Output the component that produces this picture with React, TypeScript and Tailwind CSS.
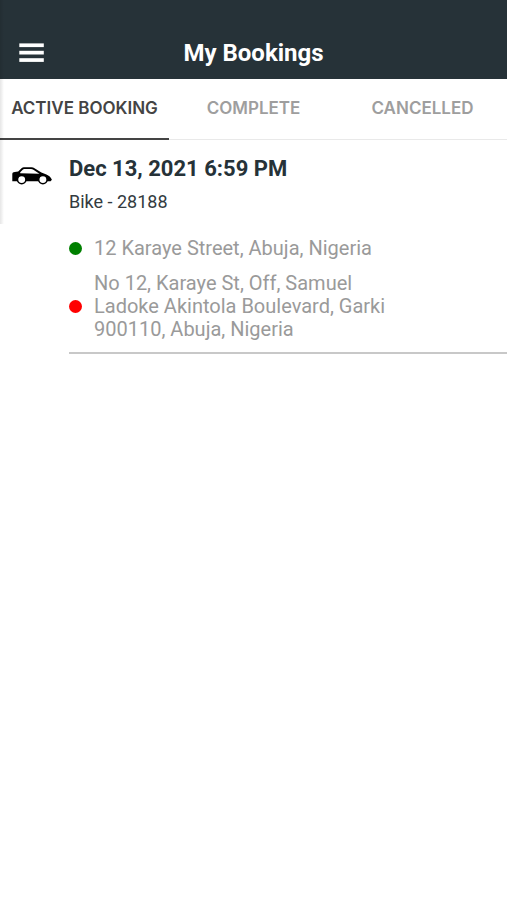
import { useState } from "react";

const tabs = ["ACTIVE BOOKING", "COMPLETE", "CANCELLED"];

const bookings = [
  {
    id: "28188",
    date: "Dec 13, 2021 6:59 PM",
    vehicle: "Bike",
    pickup: "12 Karaye Street, Abuja, Nigeria",
    drop: "No 12, Karaye St, Off, Samuel Ladoke Akintola Boulevard, Garki 900110, Abuja, Nigeria",
  },
];

const CarIcon = () => (
  <svg viewBox="0 0 40 18" className="w-10 shrink-0" aria-hidden="true">
    <path
      d="M0.3 14.2V7.2C0.3 5.7 1.2 5.2 2.8 5L6.2 4.6L9.8 1.1C10.4 0.5 11 0.3 11.8 0.3H19.4C20.6 0.3 21.6 0.6 22.5 1.2L29.4 5.6L34.4 7.6C37 8.7 38.8 10.2 39.9 12.8L38.6 14.2Z"
      fill="#000"
    />
    <path d="M8.2 5.2L11 2.5C11.3 2.2 11.7 2 12.2 2H19C20 2 20.6 2.2 21.4 2.7L27.4 6.8L8.2 6.2Z" fill="#fff" />
    <circle cx="9.7" cy="12.6" r="4.2" fill="#fff" stroke="#000" strokeWidth="1.5" />
    <circle cx="30.9" cy="12.6" r="4.2" fill="#fff" stroke="#000" strokeWidth="1.5" />
  </svg>
);

const Stop = ({ dot, address }: { dot: string; address: string }) => (
  <li className="flex items-center gap-3">
    <span className={`size-[13px] shrink-0 rounded-full ${dot}`} />
    <span className="max-w-[300px]">{address}</span>
  </li>
);

const App = () => {
  const [active, setActive] = useState(tabs[0]);

  return (
    <div className="relative min-h-screen bg-white font-[Roboto,sans-serif]">
      {/* Header */}
      <header className="grid grid-cols-[1fr_auto_1fr] items-center bg-[#263238] px-[18px] pt-7">
        <button type="button" aria-label="Open menu" className="w-[26px] justify-self-start">
          <svg viewBox="0 0 26 22" className="w-full" fill="#fff">
            <rect x="1.3" y="0.4" width="24.5" height="3.7" />
            <rect x="1.3" y="7.8" width="24.5" height="3.7" />
            <rect x="1.3" y="15.2" width="24.5" height="3.7" />
          </svg>
        </button>
        <h1 className="text-[24px] leading-[51px] font-bold text-white">My Bookings</h1>
      </header>

      {/* Tabs */}
      <nav className="grid grid-cols-3 border-b border-[#e9e9e9] font-[Inter,sans-serif]">
        {tabs.map((tab) => (
          <button
            key={tab}
            type="button"
            onClick={() => setActive(tab)}
            className={`-mb-px h-[61px] border-b-2 text-[17px] font-semibold whitespace-nowrap ${
              active === tab ? "border-[#444] text-[#444]" : "border-transparent text-[#9e9e9e]"
            }`}
          >
            {tab}
          </button>
        ))}
      </nav>

      {/* Bookings */}
      <main className="pl-3">
        {bookings.map((b) => (
          <article key={b.id} className="flex items-start gap-[17px] pt-[17px]">
            <div className="pt-[10px]">
              <CarIcon />
            </div>
            <div className="flex-1 border-b-2 border-[#c8c8c8] pb-[11px]">
              <h2 className="text-[22px] leading-6 font-bold text-[#263238]">{b.date}</h2>
              <p className="mt-[11px] text-[18px] leading-5 text-[#333b40]">
                {b.vehicle} - {b.id}
              </p>
              <ul className="mt-[25px] space-y-3 text-[20px] leading-[23px] text-[#9a9a9a]">
                <Stop dot="bg-[#008000]" address={b.pickup} />
                <Stop dot="bg-[#ff0000]" address={b.drop} />
              </ul>
            </div>
          </article>
        ))}
      </main>

      {/* Edge shadow of the closed drawer */}
      <div className="pointer-events-none absolute top-0 left-0 h-56 w-1 bg-linear-to-r from-black/10 to-transparent" />
    </div>
  );
};

export default App;
